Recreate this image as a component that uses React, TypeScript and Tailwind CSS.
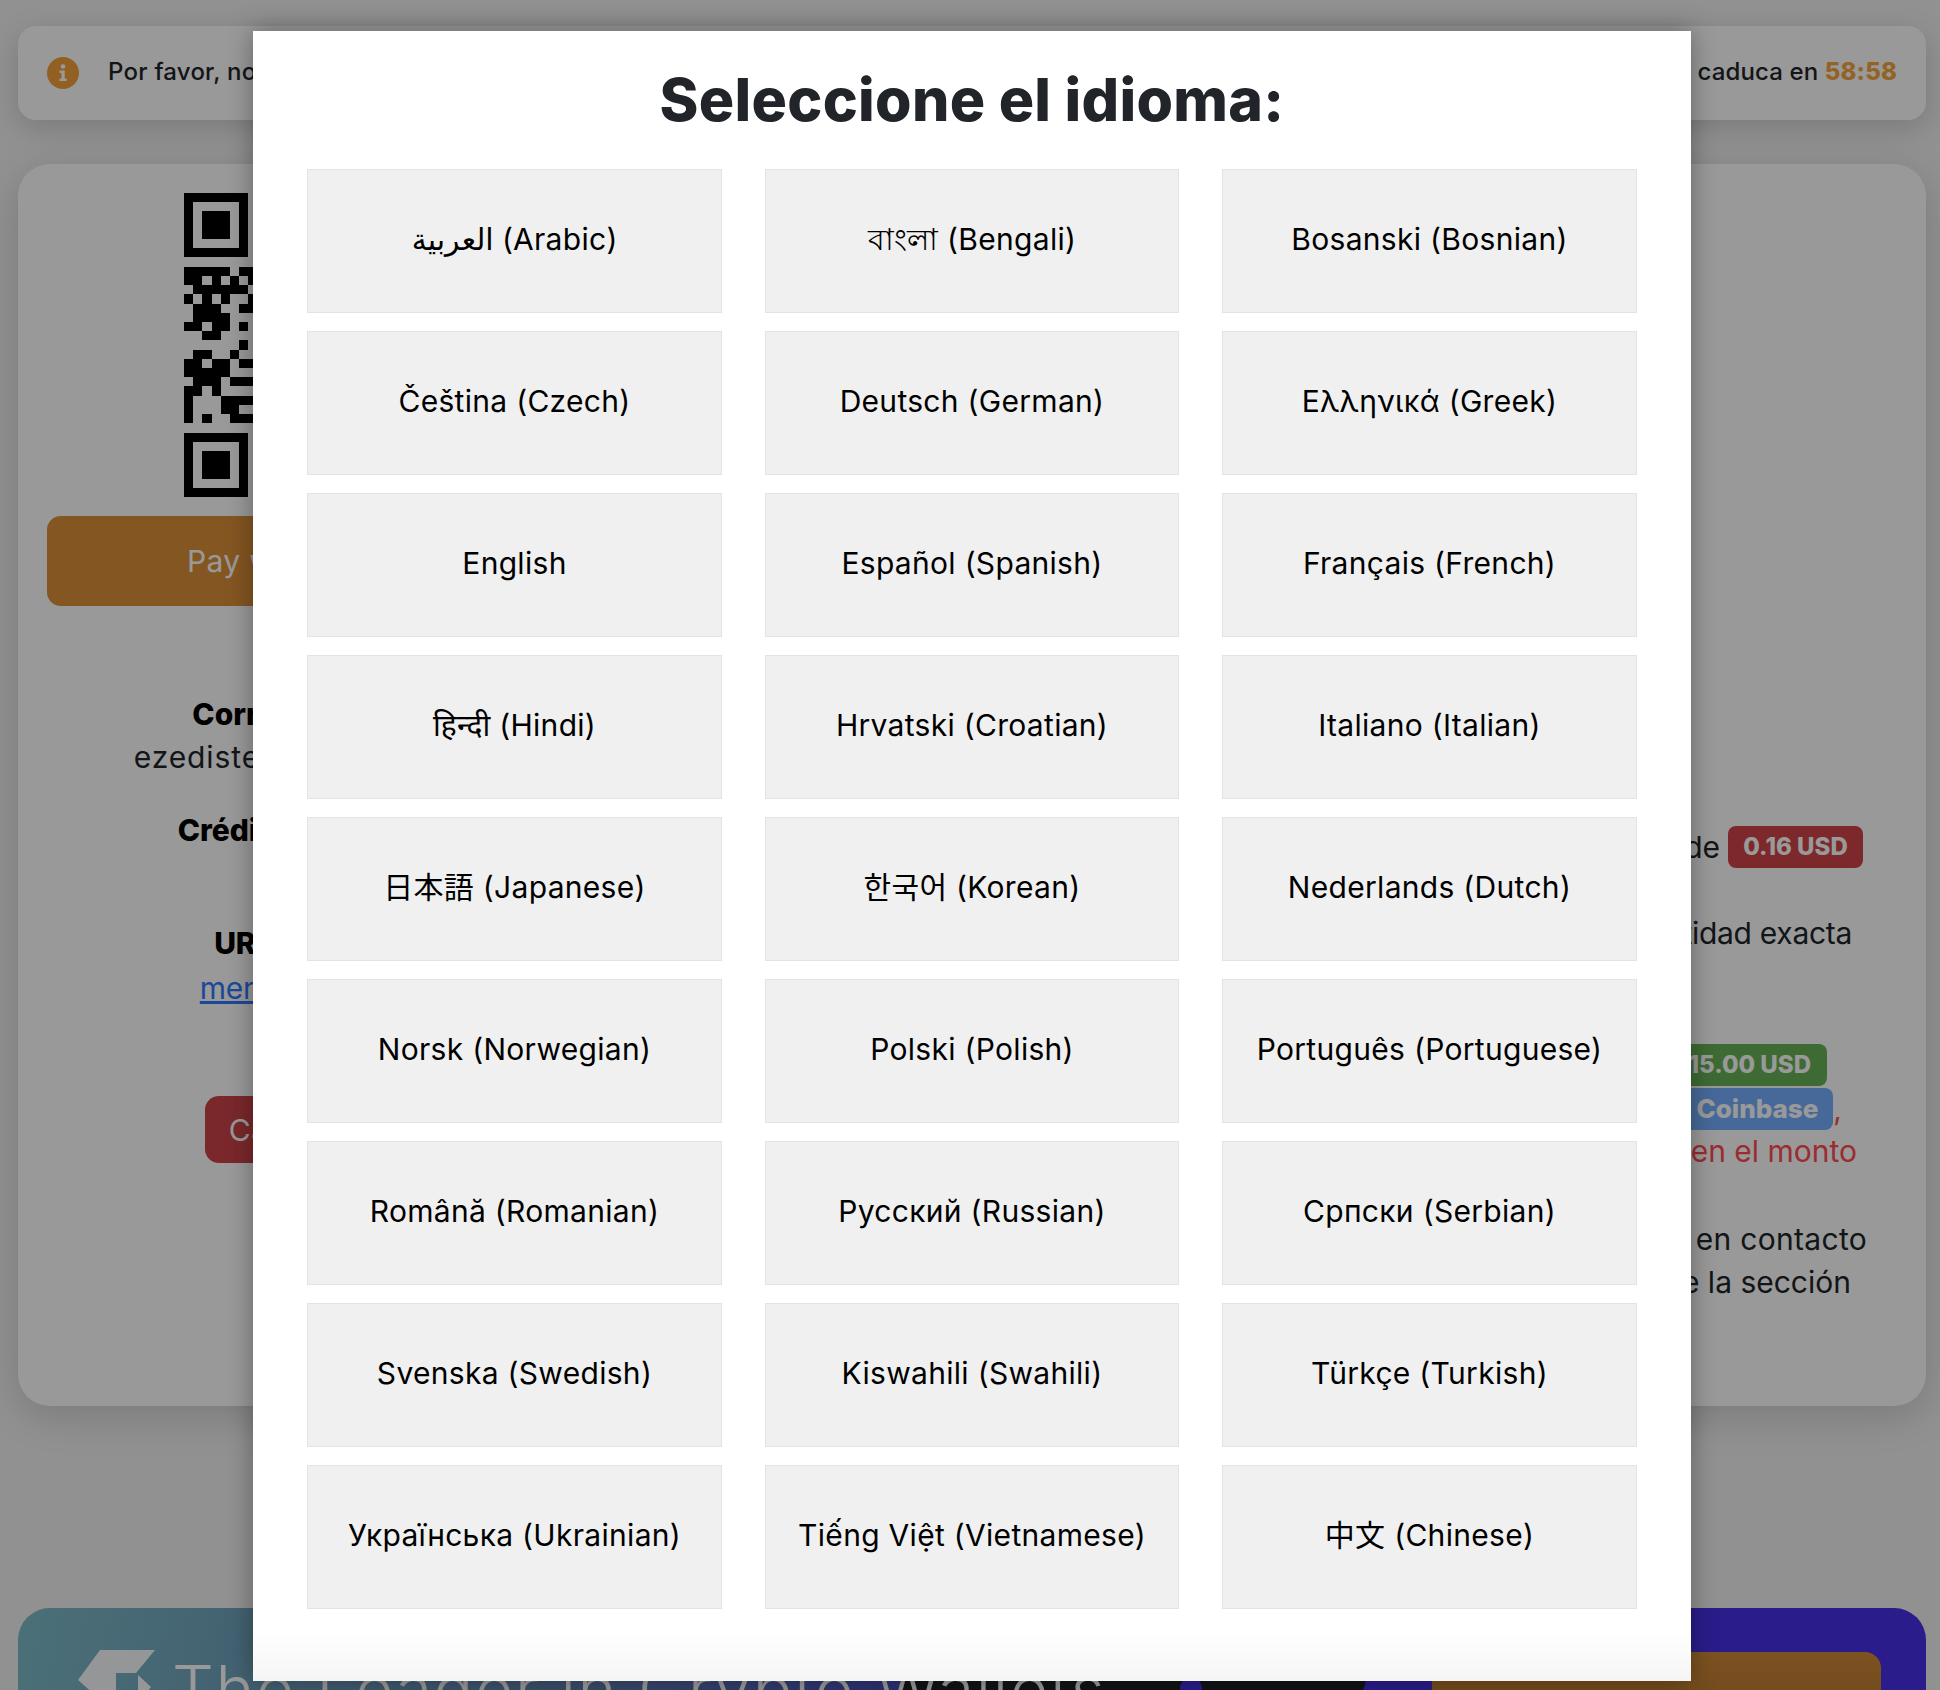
import React from "react";

const langs = [
  "العربية (Arabic)", "বাংলা (Bengali)", "Bosanski (Bosnian)",
  "Čeština (Czech)", "Deutsch (German)", "Ελληνικά (Greek)",
  "English", "Español (Spanish)", "Français (French)",
  "हिन्दी (Hindi)", "Hrvatski (Croatian)", "Italiano (Italian)",
  "日本語 (Japanese)", "한국어 (Korean)", "Nederlands (Dutch)",
  "Norsk (Norwegian)", "Polski (Polish)", "Português (Portuguese)",
  "Română (Romanian)", "Русский (Russian)", "Српски (Serbian)",
  "Svenska (Swedish)", "Kiswahili (Swahili)", "Türkçe (Turkish)",
  "Українська (Ukrainian)", "Tiếng Việt (Vietnamese)", "中文 (Chinese)",
];

// visible QR modules, as [row, startCol, length]
const qrRuns: [number, number, number][] = [
  [8, 0, 5], [8, 6, 2],
  [9, 0, 2], [9, 3, 1], [9, 5, 1], [9, 7, 1],
  [10, 1, 6],
  [11, 0, 1], [11, 2, 1], [11, 4, 1], [11, 7, 1],
  [12, 1, 3], [12, 6, 2],
  [13, 1, 4],
  [14, 0, 2], [14, 3, 2], [14, 6, 1],
  [15, 2, 2],
  [16, 6, 1],
  [17, 1, 2], [17, 5, 1],
  [18, 0, 2], [18, 3, 2], [18, 6, 2],
  [19, 0, 5],
  [20, 1, 3], [20, 5, 3],
  [21, 0, 2], [21, 3, 1],
  [22, 0, 1], [22, 4, 4],
  [23, 0, 1], [23, 4, 2],
  [24, 0, 1], [24, 2, 1], [24, 5, 3],
];

function Finder({ x, y }: { x: number; y: number }) {
  return (
    <g>
      <path d={`M${x} ${y}h7v7h-7zM${x + 1} ${y + 1}v5h5v-5z`} fillRule="evenodd" fill="#000" />
      <rect x={x + 2} y={y + 2} width={3} height={3} fill="#000" />
    </g>
  );
}

function Qr() {
  return (
    <svg viewBox="0 0 33 33" className="block w-[304px] h-[304px]" shapeRendering="crispEdges">
      <Finder x={0} y={0} />
      <Finder x={26} y={0} />
      <Finder x={0} y={26} />
      {qrRuns.map(([r, c, n], i) => (
        <rect key={i} x={c} y={r} width={n} height={1} fill="#000" />
      ))}
    </svg>
  );
}

function Badge({ className, children }: { className: string; children: React.ReactNode }) {
  return (
    <span className={`inline-flex items-center h-[42px] rounded-lg text-white font-extrabold ${className}`}>
      {children}
    </span>
  );
}

export default function App() {
  return (
    <div className="relative h-[1690px] w-[1940px] overflow-hidden bg-[#f2f2f2] pl-[18px] pt-[26px] text-[#212529] [font-family:Inter,'Noto_Sans','Noto_Sans_CJK_JP','Noto_Sans_CJK_KR','DejaVu_Sans',sans-serif]">
      {/* Notice */}
      <div className="flex h-[94px] w-[1908px] items-center justify-between rounded-[18px] bg-white pb-[2px] pl-[29px] pr-[29px] shadow-[0_8px_30px_rgba(0,0,0,0.16)]">
        <div className="flex items-center">
          <svg viewBox="0 0 32 32" className="mt-[2px] h-[32px] w-[32px]">
            <circle cx="16" cy="16" r="16" fill="#f5a03c" />
            <circle cx="16" cy="9.5" r="2.3" fill="#fff" />
            <path d="M12.5 13.5h5.2v8h2v2.6h-7.2v-2.6h2v-5.4h-2z" fill="#fff" />
          </svg>
          <span className="ml-[29px] text-[24px] font-medium tracking-[0.01em]">Por favor, no cierre esta ventana</span>
        </div>
        <span className="text-[24px] font-medium tracking-[0.005em]">
          caduca en <b className="font-extrabold text-[#f5a53f]">58:58</b>
        </span>
      </div>

      {/* Main card */}
      <div className="mt-[44px] flex h-[1242px] w-[1908px] rounded-[32px] bg-white shadow-[0_10px_40px_rgba(0,0,0,0.16)]">
        <div className="ml-[29px] flex w-[578px] flex-col items-center pt-[29px] text-center text-[30px] leading-[42px]">
          <Qr />
          <div className="mt-[19px] flex h-[90px] w-full items-center justify-center rounded-[14px] bg-[#dc8f3a] pr-[12px] text-[30px] tracking-[0.01em] text-white">
            Pay with wallet now
          </div>
          <div className="mt-[87px] font-extrabold text-black">Correo electrónico:</div>
          <div className="mt-px tracking-[0.03em]">ezediste@ejemplos.com.ar</div>
          <div className="mt-[31px] font-extrabold text-black">Créditos disponibles:</div>
          <div className="mt-[71px] font-extrabold tracking-[-0.01em] text-black">URL de comercio</div>
          <a className="mt-[3px] tracking-[-0.01em] text-[#3079ff] underline">merchants.example</a>
          <div className="mt-[87px] flex h-[67px] w-[262px] items-center justify-center rounded-[14px] bg-[#cc4348] tracking-[0.02em] text-white">
            Cancelar pago
          </div>
        </div>
        <div className="flex flex-1 flex-col items-end pt-[662px] text-[30px] leading-[42px]">
          <div className="mr-[63px] flex items-center whitespace-nowrap">
            <span>Envíe un mínimo de</span>
            <Badge className="ml-[8px] w-[135px] justify-center bg-[#d04349] text-[24px]">0.16 USD</Badge>
          </div>
          <div className="mr-[74px] mt-[44px] whitespace-nowrap tracking-[-0.01em]">cantidad exacta</div>
          <div className="mr-[99px] mt-[90px] flex whitespace-nowrap">
            <Badge className="w-[190px] justify-end bg-[#67b255] pr-[16px] text-[24px]">15.00 USD</Badge>
          </div>
          <div className="mr-[84px] mt-[2px] flex items-center whitespace-nowrap text-[#ff4b53]">
            <Badge className="w-[190px] justify-end bg-[#75afff] pr-[15px] text-[26px]">Coinbase</Badge>,
          </div>
          <div className="mr-[69px] whitespace-nowrap text-[#ff4b53]">en el monto</div>
          <div className="mr-[59px] mt-[46px] whitespace-nowrap tracking-[0.01em]">en contacto</div>
          <div className="mr-[75px] mt-px whitespace-nowrap">de la sección</div>
        </div>
      </div>

      {/* Promo banner */}
      <div className="relative mt-[202px] flex h-[300px] w-[1908px] overflow-hidden rounded-t-[32px] bg-[linear-gradient(100deg,#7dbbc8_0%,#5f7fae_30%,#4a52bc_45%,#4630e6_70%)]">
        <div className="absolute left-[882px] top-[60px] h-[60px] w-[470px] bg-[#212126] [clip-path:polygon(0_0,100%_0,96%_100%,0_100%)]">
          <div className="absolute left-[280px] top-[10px] h-[20px] w-[22px] rounded-full bg-[#4630e6]" />
        </div>
        <div className="absolute left-[1414px] top-[44px] h-[60px] w-[449px] rounded-t-[16px] bg-[linear-gradient(to_bottom,#d28a38,#b87830)]" />
        <svg viewBox="0 0 90 60" className="relative ml-[58px] mt-[42px] h-[60px] w-[90px] shrink-0">
          <path d="M24 0h55L60 23H40v30L28 53 2 30z" fill="#fff" fillOpacity="0.95" />
          <path d="M62 25l13 12-13 18z" fill="#fff" fillOpacity="0.95" />
        </svg>
        <div className="relative flex-1">
          <div className="absolute left-[6px] top-[41px] whitespace-nowrap text-[66px] font-light leading-[80px] tracking-[0.025em] text-white">
            The Leader in Crypto Wallets
          </div>
        </div>
      </div>

      {/* Overlay + modal */}
      <div className="absolute inset-0 bg-black/40">
        <div className="ml-[253px] mt-[31px] h-[1650px] w-[1438px] bg-[linear-gradient(to_bottom,#fff_97%,#f5f5f5)] px-[54px] shadow-[0_0_24px_rgba(0,0,0,0.35)]">
          <h2 className="pt-[30px] text-center text-[59px] font-extrabold leading-[78px] tracking-[0.005em] text-[#212529]">
            Seleccione el idioma:
          </h2>
          <div className="mt-[30px] grid grid-cols-[415px_414px_415px] gap-x-[43px] gap-y-[18px]">
            {langs.map((l) => (
              <button
                key={l}
                className="flex h-[144px] items-center justify-center border border-[#e3e3e3] bg-[#f0f0f0] pb-[4px] text-[30px] tracking-[0.01em] text-black"
              >
                {l}
              </button>
            ))}
          </div>
        </div>
      </div>
    </div>
  );
}
